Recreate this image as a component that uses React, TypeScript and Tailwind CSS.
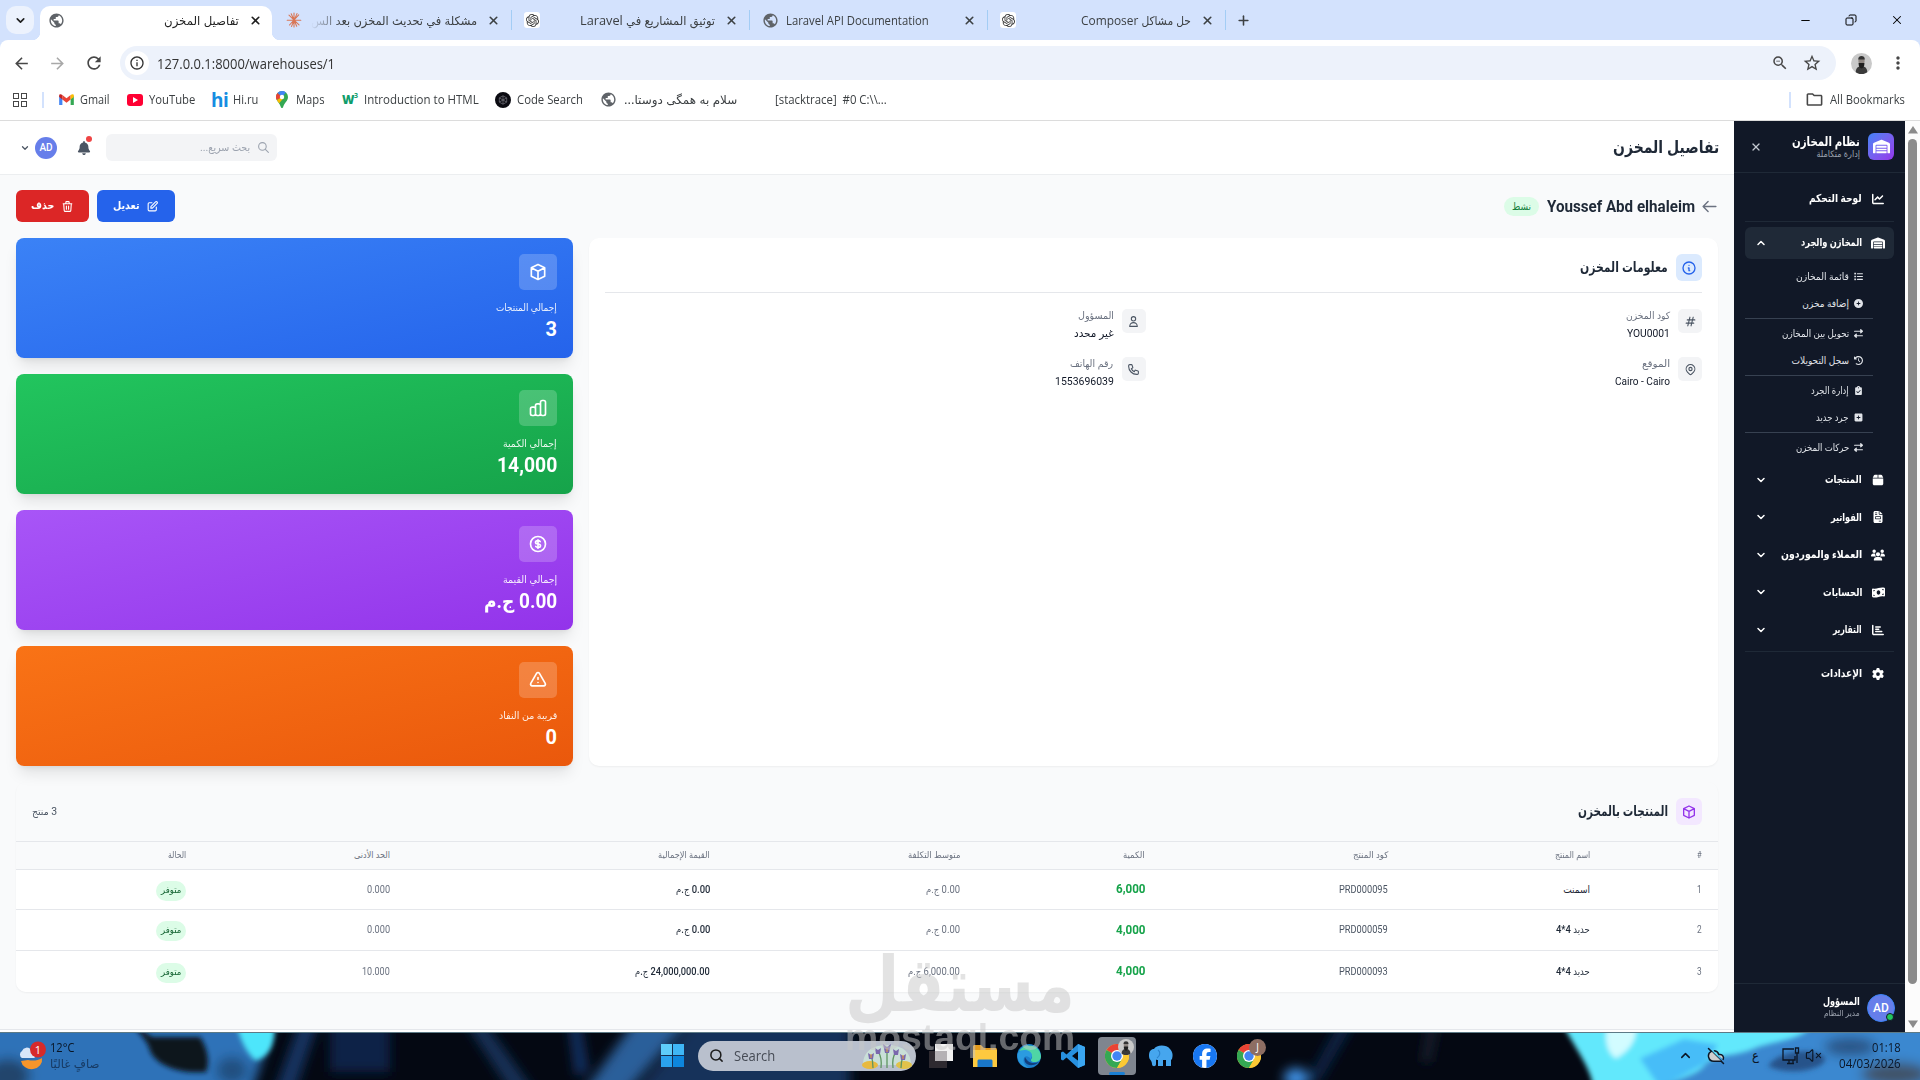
import { useLayoutEffect, useRef, useState, type ReactNode } from 'react';
import type { IconType } from 'react-icons';
import {
  FaBell,
  FaBox,
  FaChartBar,
  FaChartLine,
  FaCirclePlus,
  FaClipboardCheck,
  FaClockRotateLeft,
  FaFacebook,
  FaFileInvoice,
  FaGear,
  FaList,
  FaMoneyBillWave,
  FaRightLeft,
  FaSquarePlus,
  FaUsers,
  FaWarehouse,
} from 'react-icons/fa6';
import {
  HiOutlineArrowLeft,
  HiOutlineChartBar,
  HiOutlineCube,
  HiOutlineCurrencyDollar,
  HiOutlineExclamation,
  HiOutlineHashtag,
  HiOutlineInformationCircle,
  HiOutlineLocationMarker,
  HiOutlinePencilAlt,
  HiOutlinePhone,
  HiOutlineSearch,
  HiOutlineTrash,
  HiOutlineUser,
} from 'react-icons/hi';
import {
  MdArrowBack,
  MdArrowForward,
  MdInfoOutline,
  MdMoreVert,
  MdOutlineFolder,
  MdPublic,
  MdRefresh,
  MdStarBorder,
  MdZoomOut,
} from 'react-icons/md';
import { SiOpenai } from 'react-icons/si';
import { ChevronDown, ChevronUp, CloudOff, Copy, Minus, Plus, Search, VolumeX, X } from 'lucide-react';

type FitProps = {
  w: number;
  ltr?: boolean;
  className?: string;
  children: ReactNode;
};

// Single line of text squeezed or widened to a fixed width.
function Fit({ w, ltr = false, className = '', children }: FitProps) {
  const ref = useRef<HTMLSpanElement>(null);
  const [scale, setScale] = useState(1);

  useLayoutEffect(() => {
    const natural = ref.current?.offsetWidth ?? 0;
    if (natural > 0) setScale(w / natural);
  }, [w]);

  return (
    <span dir={ltr ? 'ltr' : 'rtl'} className={`flex shrink-0 ${className}`} style={{ width: w }}>
      <span
        ref={ref}
        className={`inline-block shrink-0 whitespace-nowrap ${ltr ? 'origin-left' : 'origin-right'}`}
        style={{ transform: `scaleX(${scale})` }}
      >
        {children}
      </span>
    </span>
  );
}

/* ---------- browser ---------- */

function ClaudeIcon() {
  return (
    <svg viewBox="0 0 16 16" className="size-4" stroke="#d97757" strokeWidth="1.1" strokeLinecap="round">
      <path d="M8 1v14M1.200 8.300h13.600M3 3.200l10 9.600M12.700 2.800L3.500 13M5.200 1.800l5.500 12.500M11 1.600L5.500 14.400" />
    </svg>
  );
}

function OpenAiIcon() {
  return (
    <span className="flex size-4 items-center justify-center rounded-[3px] bg-white">
      <SiOpenai className="size-[13px] text-[#333]" />
    </span>
  );
}

type TabProps = {
  icon: ReactNode;
  title: string;
  w: number;
  ltr?: boolean;
  fade?: boolean;
};

function BrowserTab({ icon, title, w, ltr, fade }: TabProps) {
  return (
    <div className="flex h-5 w-[238px] items-center border-r border-[#a3cdf5] pr-[11px] pl-3">
      {icon}
      <div className={`flex flex-1 pt-[2px] pr-[10px] pl-[7px] ${ltr ? 'justify-start' : 'justify-end'}`}>
        <div className="relative">
          <Fit w={w} ltr={ltr} className="text-[12px] text-[#3c4043]">
            {title}
          </Fit>
          {fade && <div className="absolute inset-y-0 left-0 w-8 bg-linear-to-r from-[#d3e2fd] to-transparent" />}
        </div>
      </div>
      <X className="size-[13px] text-[#3c4043]" strokeWidth={3} />
    </div>
  );
}

function TabStrip() {
  return (
    <div className="flex h-10 items-center bg-[#d3e2fd]">
      <div className="ml-[6px] flex size-7 items-center justify-center rounded-[10px] bg-[#ecf2fd]">
        <ChevronDown className="size-[13px] text-[#1f1f1f]" strokeWidth={3} />
      </div>
      <div className="relative ml-[6px] flex h-[34px] w-[232px] items-center self-end rounded-t-[10px] bg-white pr-[10px] pb-[6px] pl-2">
        <div className="absolute bottom-0 -left-2 size-2 bg-[radial-gradient(circle_at_0_0,#d3e2fd_8px,#fff_8.5px)]" />
        <div className="absolute -right-2 bottom-0 size-2 bg-[radial-gradient(circle_at_100%_0,#d3e2fd_8px,#fff_8.5px)]" />
        <MdPublic className="size-[17px] text-[#5f6368]" />
        <div className="flex flex-1 justify-end pt-[2px] pr-[10px]">
          <Fit w={75} className="text-[12px] text-[#1f1f1f]">
            تفاصيل المخزن
          </Fit>
        </div>
        <X className="size-[13px] text-[#1f1f1f]" strokeWidth={3} />
      </div>
      <div className="ml-[2px] flex items-center">
        <BrowserTab icon={<ClaudeIcon />} title="مشكلة في تحديث المخزن بعد الس" w={166} fade />
        <BrowserTab icon={<OpenAiIcon />} title="توثيق المشاريع في Laravel" w={135} />
        <BrowserTab icon={<MdPublic className="size-[17px] text-[#5f6368]" />} title="Laravel API Documentation" w={143} ltr />
        <BrowserTab icon={<OpenAiIcon />} title="حل مشاكل Composer" w={110} />
      </div>
      <Plus className="ml-[10px] size-[15px] text-[#3c4043]" strokeWidth={2.5} />
      <div className="mr-[16px] ml-auto flex items-center gap-[33px] text-black">
        <Minus className="size-[13px]" strokeWidth={1.8} />
        <Copy className="size-[12px] -scale-x-100" strokeWidth={2} />
        <X className="size-[14px]" strokeWidth={1.8} />
      </div>
    </div>
  );
}

function UserPhoto({ className }: { className: string }) {
  return (
    <svg viewBox="0 0 20 20" className={className}>
      <circle cx="10" cy="10" r="10" fill="#c9c9c9" />
      <path d="M4.500 18.400C4.500 14 7 12.500 10 12.500s5.500 1.500 5.500 5.900A10 10 0 0 1 4.500 18.400z" fill="#3a3a3a" />
      <circle cx="10" cy="7.500" r="3" fill="#8d8580" />
      <path d="M6.800 6.300C7 3.700 8.200 2.900 10 2.900s3 .8 3.200 3.400z" fill="#333" />
      <path d="M7.200 9.500h5.600c0 3-1 5.200-2.800 5.200S7.200 12.500 7.200 9.500z" fill="#1e1e1e" />
    </svg>
  );
}

function AddressBar() {
  return (
    <div className="flex h-[46px] items-center rounded-t-[8px] bg-white">
      <MdArrowBack className="ml-3 size-[19px] text-[#474747]" />
      <MdArrowForward className="ml-[17px] size-[19px] text-[#a8a8a8]" />
      <MdRefresh className="ml-[17px] size-[20px] text-[#474747]" />
      <div className="ml-4 flex h-[34px] w-[1716px] items-center rounded-full bg-[#edf2fb] pl-[5px]">
        <span className="flex size-6 items-center justify-center rounded-full bg-white">
          <MdInfoOutline className="size-4 text-[#333]" />
        </span>
        <Fit w={178} ltr className="ml-[8px] text-[14px] text-[#333]">
          127.0.0.1:8000/warehouses/1
        </Fit>
        <MdZoomOut className="ml-auto size-[18px] text-[#474747]" />
        <MdStarBorder className="mr-[14px] ml-[13px] size-[20px] text-[#474747]" />
      </div>
      <UserPhoto className="ml-[15px] size-[21px]" />
      <MdMoreVert className="ml-[16px] size-5 text-[#474747]" />
    </div>
  );
}

function GmailIcon() {
  return (
    <svg viewBox="0 0 16 12" className="h-[11px] w-[15px]">
      <path d="M0 1.500V12h3.500V5z" fill="#4285f4" />
      <path d="M16 1.500V12h-3.500V5z" fill="#34a853" />
      <path d="M3.500 1v5L8 9.500 12.500 6V1L8 4.500z" fill="#ea4335" />
      <path d="M12.500 1.200v4.800L16 3.300V1.800C16 0 14 0 12.500 1.200z" fill="#fbbc04" />
      <path d="M3.500 1.200V6L0 3.300V1.800C0 0 2 0 3.500 1.200z" fill="#c5221f" />
    </svg>
  );
}

function MapsIcon() {
  return (
    <svg viewBox="0 0 12 17" className="h-[17px] w-[12px]">
      <path d="M6 0a6 6 0 0 0-6 6c0 4 4 6 5 10.500.300.700 1.700.700 2 0C8 12 12 10 12 6a6 6 0 0 0-6-6z" fill="#34a853" />
      <path d="M6 0a6 6 0 0 0-4.600 2.100L6 6l3.900-4.600A6 6 0 0 0 6 0z" fill="#4285f4" />
      <path d="M1.400 2.100A6 6 0 0 0 .9 9L6 6z" fill="#ea4335" />
      <path d="M.9 9c.6 1.200 1.500 2.100 2.300 3.300L8 6.500 6 6z" fill="#fbbc04" />
      <circle cx="6" cy="6" r="2.200" fill="#fff" />
    </svg>
  );
}

function Bookmarks() {
  return (
    <div className="flex h-[35px] items-center border-b border-[#dcdcdc] bg-white pb-[7px] text-[12px] text-[#3c4043]">
      <div className="ml-[13px] grid grid-cols-2 gap-[2px]">
        <span className="size-[6px] border-[1.5px] border-[#474747]" />
        <span className="size-[6px] border-[1.5px] border-[#474747]" />
        <span className="size-[6px] border-[1.5px] border-[#474747]" />
        <span className="size-[6px] border-[1.5px] border-[#474747]" />
      </div>
      <div className="mr-[15px] ml-[15px] h-4 w-[2px] bg-[#d3e2fd]" />
      <GmailIcon />
      <Fit w={30} ltr className="ml-[6px]">Gmail</Fit>
      <span className="ml-[17px] flex h-[12px] w-[16px] items-center justify-center rounded-[3px] bg-[#ff0033]">
        <svg viewBox="0 0 6 6" className="size-[6px]">
          <path d="M1 0l5 3-5 3z" fill="#fff" />
        </svg>
      </span>
      <Fit w={46} ltr className="ml-[6px]">YouTube</Fit>
      <span className="ml-[16px] w-[16px] text-[19px] leading-4 font-bold tracking-tight text-[#168de2]">hi</span>
      <Fit w={25} ltr className="ml-[6px]">Hi.ru</Fit>
      <span className="ml-[18px]"><MapsIcon /></span>
      <Fit w={29} ltr className="ml-[8px]">Maps</Fit>
      <span className="ml-[17px] flex w-[16px] items-center">
        <Fit w={12} ltr className="text-[12px] leading-4 font-extrabold text-[#0f9d6b]">W</Fit>
        <span className="mb-[7px] text-[7px] leading-2 font-bold text-[#0f9d6b]">3</span>
      </span>
      <Fit w={115} ltr className="ml-[6px]">Introduction to HTML</Fit>
      <span className="ml-[16px] flex size-4 items-center justify-center rounded-full bg-[#0b0b12]">
        <svg viewBox="0 0 10 10" className="size-[10px]" fill="none" stroke="#77777f" strokeWidth=".7">
          <path d="M5 .8l3.700 2.100v4.200L5 9.200 1.300 7.100V2.900zM5 .8v8.400M1.300 2.900l7.400 4.200M8.700 2.900L1.300 7.100" />
        </svg>
      </span>
      <Fit w={66} ltr className="ml-[6px]">Code Search</Fit>
      <MdPublic className="ml-[17px] size-[17px] text-[#5f6368]" />
      <Fit w={113} className="ml-[7px]">سلام به همگی دوستا...</Fit>
      <Fit w={112} ltr className="ml-[38px]">[stacktrace]&nbsp; #0 C:\\...</Fit>
      <div className="ml-auto h-4 w-[2px] bg-[#d3e2fd]" />
      <MdOutlineFolder className="ml-[14px] size-[19px] text-[#474747]" />
      <Fit w={75} ltr className="mr-[15px] ml-[6px]">All Bookmarks</Fit>
    </div>
  );
}

/* ---------- sidebar ---------- */

type NavRowProps = {
  icon: IconType;
  iconClass?: string;
  label: string;
  w: number;
  chevron?: 'up' | 'down';
  className: string;
};

function NavRow({ icon: Icon, iconClass = 'size-[12px]', label, w, chevron, className }: NavRowProps) {
  return (
    <div className={`flex shrink-0 items-center pr-[8px] pl-[10px] text-white ${className}`}>
      <span className="flex w-4 justify-center">
        <Icon className={iconClass} />
      </span>
      <Fit w={w} className="mr-2 pt-px text-[11px] font-bold">{label}</Fit>
      {chevron === 'up' && <ChevronUp className="mr-auto size-[12px]" strokeWidth={3} />}
      {chevron === 'down' && <ChevronDown className="mr-auto size-[12px]" strokeWidth={3} />}
    </div>
  );
}

const SUB_GROUPS: { icon: IconType; label: string; w: number }[][] = [
  [
    { icon: FaList, label: 'قائمة المخازن', w: 53 },
    { icon: FaCirclePlus, label: 'إضافة مخزن', w: 47 },
  ],
  [
    { icon: FaRightLeft, label: 'تحويل بين المخازن', w: 67 },
    { icon: FaClockRotateLeft, label: 'سجل التحويلات', w: 57 },
  ],
  [
    { icon: FaClipboardCheck, label: 'إدارة الجرد', w: 38 },
    { icon: FaSquarePlus, label: 'جرد جديد', w: 33 },
  ],
  [{ icon: FaRightLeft, label: 'حركات المخزن', w: 53 }],
];

function Sidebar() {
  return (
    <aside className="flex w-[171px] shrink-0 flex-col bg-[#111827]">
      <div className="flex h-[52px] items-center border-b border-[#1f2937] pr-[11px] pl-4">
        <span className="flex h-[27px] w-[26px] items-center justify-center rounded-[6px] bg-linear-to-br from-[#3b82f6] to-[#9333ea] text-white">
          <FaWarehouse className="size-[17px]" />
        </span>
        <div className="mr-2 flex flex-col">
          <Fit w={68} className="text-[13px] leading-[14px] font-bold text-white">نظام المخازن</Fit>
          <Fit w={44} className="text-[9px] leading-[10px] text-[#9ca3af]">إدارة متكاملة</Fit>
        </div>
        <X className="mr-auto size-[12px] text-[#c4c9d1]" strokeWidth={2.5} />
      </div>
      <nav className="flex flex-1 flex-col px-[11px] pt-[10px]">
        <NavRow icon={FaChartLine} label="لوحة التحكم" w={53} className="h-8" />
        <div className="mt-[6px] mb-[5px] h-px bg-[#1f2937]" />
        <NavRow
          icon={FaWarehouse}
          iconClass="size-[14px]"
          label="المخازن والجرد"
          w={61}
          chevron="up"
          className="h-8 rounded-[6px] bg-[#1f2937]"
        />
        <div className="flex flex-col pt-[4px]">
          {SUB_GROUPS.map((group, index) => (
            <div key={index} className="flex flex-col">
              {index > 0 && <div className="my-px mr-[21px] h-px bg-[#374151]" />}
              {group.map(({ icon: Icon, label, w }) => (
                <div key={label} className="flex h-[27px] items-center pr-[31px] pb-px text-[#e1e4e9]">
                  <Icon className="size-[9px]" />
                  <Fit w={w} className="mr-[5px] text-[10px]">{label}</Fit>
                </div>
              ))}
            </div>
          ))}
        </div>
        <NavRow icon={FaBox} label="المنتجات" w={37} chevron="down" className="h-[37.5px]" />
        <NavRow icon={FaFileInvoice} label="الفواتير" w={31} chevron="down" className="h-[37.5px]" />
        <NavRow icon={FaUsers} iconClass="size-[14px]" label="العملاء والموردون" w={81} chevron="down" className="h-[37.5px]" />
        <NavRow icon={FaMoneyBillWave} iconClass="size-[13px]" label="الحسابات" w={39} chevron="down" className="h-[37.5px]" />
        <NavRow icon={FaChartBar} label="التقارير" w={29} chevron="down" className="h-[37.5px]" />
        <div className="mt-[2px] mb-[6px] h-px bg-[#1f2937]" />
        <NavRow icon={FaGear} label="الإعدادات" w={41} className="h-8" />
      </nav>
      <div className="flex h-[49px] items-center border-t border-[#1f2937] pr-[10px]">
        <div className="relative mb-[1px] flex size-7 items-center justify-center rounded-full border border-[#3b82f6] bg-[#667eea] text-[12px] font-medium text-white">
          AD
          <span className="absolute right-0 bottom-0 size-[8px] rounded-full border border-[#111827] bg-[#22c55e]" />
        </div>
        <div className="mr-[7px] mb-[2px] flex flex-col">
          <Fit w={37} className="text-[11px] leading-[12px] font-bold text-white">المسؤول</Fit>
          <Fit w={36} className="text-[8.5px] leading-[10px] text-[#9ca3af]">مدير النظام</Fit>
        </div>
      </div>
    </aside>
  );
}

/* ---------- page ---------- */

function PageHeader() {
  return (
    <header className="flex h-[54px] items-center border-b border-[#eceef0] bg-white pr-[15px] pl-[20px]">
      <Fit w={106} className="pt-px text-[17px] font-bold text-[#1f2937]">تفاصيل المخزن</Fit>
      <div className="mr-auto flex h-[27px] w-[171px] items-center rounded-[6px] bg-[#f3f4f6] pr-[7px]">
        <HiOutlineSearch className="size-[13px] text-[#9ca3af]" />
        <Fit w={50} className="mr-[7px] pt-px text-[11px] text-[#9ca3af]">بحث سريع...</Fit>
      </div>
      <div className="relative mr-[15px]">
        <FaBell className="size-[14px] text-[#4b5563]" />
        <span className="absolute -top-[5px] -right-[1px] size-[6px] rounded-full bg-[#ef4444]" />
      </div>
      <div className="mr-[20px] flex size-[22px] items-center justify-center rounded-full bg-[#667eea] text-[10px] font-medium text-white">
        AD
      </div>
      <ChevronDown className="mr-[5px] size-[10px] text-[#4b5563]" strokeWidth={3} />
    </header>
  );
}

function TitleRow() {
  return (
    <div className="flex h-8 items-center">
      <HiOutlineArrowLeft className="size-[17px] text-[#6b7280]" />
      <Fit w={148} ltr className="mr-[6px] pt-px text-[17px] font-bold text-[#1f2937]">Youssef Abd elhaleim</Fit>
      <span className="mr-2 flex h-[19px] w-[35px] items-center justify-center rounded-full bg-[#dcfce7]">
        <Fit w={19} className="text-[10px] text-[#15803d]">نشط</Fit>
      </span>
      <div className="mr-auto flex gap-2 text-white">
        <button type="button" className="flex h-8 w-[78px] items-center justify-center gap-[6px] rounded-[6px] bg-[#2563eb]">
          <HiOutlinePencilAlt className="size-[13px]" />
          <Fit w={27} className="text-[11px] font-bold">تعديل</Fit>
        </button>
        <button type="button" className="flex h-8 w-[73px] items-center justify-center gap-[6px] rounded-[6px] bg-[#dc2626]">
          <HiOutlineTrash className="size-[13px]" />
          <Fit w={23} className="text-[11px] font-bold">حذف</Fit>
        </button>
      </div>
    </div>
  );
}

const INFO_ITEMS: { icon: IconType; label: string; labelW: number; value: string; valueW: number; ltr?: boolean }[] = [
  { icon: HiOutlineHashtag, label: 'كود المخزن', labelW: 44, value: 'YOU0001', valueW: 43, ltr: true },
  { icon: HiOutlineUser, label: 'المسؤول', labelW: 36, value: 'غير محدد', valueW: 40 },
  { icon: HiOutlineLocationMarker, label: 'الموقع', labelW: 28, value: 'Cairo - Cairo', valueW: 55, ltr: true },
  { icon: HiOutlinePhone, label: 'رقم الهاتف', labelW: 43, value: '1553696039', valueW: 59, ltr: true },
];

function InfoCard() {
  return (
    <section className="w-[1129px] rounded-[10px] bg-white p-4 shadow-xs">
      <div className="flex items-center border-b border-[#e5e7eb] pb-[11px]">
        <span className="flex h-[27px] w-[26px] items-center justify-center rounded-[6px] bg-[#dbeafe]">
          <HiOutlineInformationCircle className="size-4 text-[#2563eb]" />
        </span>
        <Fit w={88} className="mr-2 pb-px text-[14px] font-bold text-[#1f2937]">معلومات المخزن</Fit>
      </div>
      <div className="mt-4 grid grid-cols-2 gap-x-4 gap-y-[15px]">
        {INFO_ITEMS.map(({ icon: Icon, label, labelW, value, valueW, ltr }) => (
          <div key={label} className="flex h-[33px]">
            <span className="flex size-6 items-center justify-center rounded-[5px] bg-[#f3f4f6]">
              <Icon className="size-[13px] text-[#4b5563]" />
            </span>
            <div className="mr-2 -mt-px flex flex-col gap-[2px]">
              <Fit w={labelW} className="text-[10px] leading-4 text-[#6b7280]">{label}</Fit>
              <Fit w={valueW} ltr={ltr} className="text-[11px] leading-4 text-[#111827]">{value}</Fit>
            </div>
          </div>
        ))}
      </div>
    </section>
  );
}

const STATS: { icon: IconType; label: string; labelW: number; value: string; valueW: number; bg: string }[] = [
  {
    icon: HiOutlineCube,
    label: 'إجمالي المنتجات',
    labelW: 61,
    value: '3',
    valueW: 11,
    bg: 'bg-linear-to-br from-[#3b82f6] to-[#2563eb]',
  },
  {
    icon: HiOutlineChartBar,
    label: 'إجمالي الكمية',
    labelW: 54,
    value: '14,000',
    valueW: 60,
    bg: 'bg-linear-to-br from-[#22c55e] to-[#16a34a]',
  },
  {
    icon: HiOutlineCurrencyDollar,
    label: 'إجمالي القيمة',
    labelW: 54,
    value: '0.00 ج.م',
    valueW: 73,
    bg: 'bg-linear-to-br from-[#a855f7] to-[#9333ea]',
  },
  {
    icon: HiOutlineExclamation,
    label: 'قريبة من النفاد',
    labelW: 58,
    value: '0',
    valueW: 11,
    bg: 'bg-linear-to-br from-[#f97316] to-[#ea580c]',
  },
];

function StatCards() {
  return (
    <div className="flex w-[557px] flex-col gap-4">
      {STATS.map(({ icon: Icon, label, labelW, value, valueW, bg }) => (
        <div key={label} className={`flex h-[120px] flex-col rounded-[8px] p-4 text-white shadow-lg ${bg}`}>
          <span className="flex size-[38px] items-center justify-center rounded-[5px] bg-white/20">
            <Icon className="size-[20px]" />
          </span>
          <Fit w={labelW} className="mt-[10px] text-[10px] leading-4 text-white/90">{label}</Fit>
          <Fit w={valueW} className="mt-[1px] text-[20px] leading-[25px] font-bold">{value}</Fit>
        </div>
      ))}
    </div>
  );
}

const COLUMNS = [
  { label: '#', w: 5, cell: 'w-[112px]' },
  { label: 'اسم المنتج', w: 35, cell: 'w-[202px]' },
  { label: 'كود المنتج', w: 35, cell: 'w-[243px]' },
  { label: 'الكمية', w: 22, cell: 'w-[185px]' },
  { label: 'متوسط التكلفة', w: 52, cell: 'w-[250px]' },
  { label: 'القيمة الإجمالية', w: 52, cell: 'w-[320px]' },
  { label: 'الحد الأدنى', w: 36, cell: 'w-[204px]' },
  { label: 'الحالة', w: 18, cell: 'w-[186px]' },
];

const PRODUCTS = [
  { id: '1', name: 'اسمنت', nameW: 27, code: 'PRD000095', qty: '6,000', cost: '0.00 ج.م', costW: 34, total: '0.00 ج.م', totalW: 34, min: '0.000', minW: 23 },
  { id: '2', name: 'حديد 4*4', nameW: 34, code: 'PRD000059', qty: '4,000', cost: '0.00 ج.م', costW: 34, total: '0.00 ج.م', totalW: 34, min: '0.000', minW: 23 },
  { id: '3', name: 'حديد 4*4', nameW: 34, code: 'PRD000093', qty: '4,000', cost: '6,000.00 ج.م', costW: 52, total: '24,000,000.00 ج.م', totalW: 75, min: '10.000', minW: 28 },
];

function ProductsCard() {
  return (
    <section className="mt-4 overflow-hidden rounded-[10px] bg-[#f9fafb] shadow-xs">
      <div className="flex h-[60px] items-center border-b border-[#e5e7eb] px-4">
        <span className="flex h-[27px] w-[26px] items-center justify-center rounded-[6px] bg-[#f3e8ff]">
          <HiOutlineCube className="size-4 text-[#9333ea]" />
        </span>
        <Fit w={90} className="mr-2 pb-px text-[14px] font-bold text-[#1f2937]">المنتجات بالمخزن</Fit>
        <Fit w={25} className="mr-auto text-[10px] text-[#4b5563]">3 منتج</Fit>
      </div>
      <div className="flex h-7 items-center border-b border-[#e5e7eb]">
        {COLUMNS.map(({ label, w, cell }) => (
          <div key={label} className={`px-4 ${cell}`}>
            <Fit w={w} className="text-[9px] text-[#6b7280]">{label}</Fit>
          </div>
        ))}
      </div>
      <div className="divide-y divide-[#e5e7eb] bg-white text-[10px] text-[#6b7280]">
        {PRODUCTS.map((p) => (
          <div key={p.id} className="flex h-[41px] items-center pb-px first:h-[40px]">
            <div className="w-[112px] px-4">
              <Fit w={5}>{p.id}</Fit>
            </div>
            <div className="w-[202px] px-4">
              <Fit w={p.nameW} className="font-medium text-[#1f2937]">{p.name}</Fit>
            </div>
            <div className="w-[243px] px-4">
              <Fit w={49} className="text-[#4b5563]">{p.code}</Fit>
            </div>
            <div className="w-[185px] px-4">
              <Fit w={30} className="text-[12px] font-bold text-[#16a34a]">{p.qty}</Fit>
            </div>
            <div className="w-[250px] px-4">
              <Fit w={p.costW}>{p.cost}</Fit>
            </div>
            <div className="w-[320px] px-4">
              <Fit w={p.totalW} className="font-medium text-[#1f2937]">{p.total}</Fit>
            </div>
            <div className="w-[204px] px-4">
              <Fit w={p.minW}>{p.min}</Fit>
            </div>
            <div className="w-[186px] px-4 pt-[3px]">
              <span className="flex h-5 w-[30px] items-center justify-center rounded-full bg-[#dcfce7]">
                <Fit w={20} className="text-[9px] text-[#166534]">متوفر</Fit>
              </span>
            </div>
          </div>
        ))}
      </div>
    </section>
  );
}

function PageScrollbar() {
  return (
    <div className="flex w-[15px] shrink-0 flex-col items-center bg-[#fcfcfc] pt-[5px] pb-[4px]">
      <svg viewBox="0 0 10 8" className="h-[8px] w-[10px]">
        <path d="M5 0l5 7.500H0z" fill="#8b8b8b" />
      </svg>
      <div className="mt-[5px] h-[845px] w-[9px] rounded-full bg-[#8b8b8b]" />
      <svg viewBox="0 0 10 8" className="mt-auto h-[8px] w-[10px]">
        <path d="M5 8L10 .5H0z" fill="#8b8b8b" />
      </svg>
    </div>
  );
}

/* ---------- taskbar ---------- */

function Wallpaper() {
  return (
    <svg viewBox="0 0 1920 48" preserveAspectRatio="none" className="absolute inset-0 size-full">
      <defs>
        <filter id="soft" filterUnits="userSpaceOnUse" x="-40" y="-40" width="2000" height="130">
          <feGaussianBlur stdDeviation="6" />
        </filter>
        <filter id="crisp" filterUnits="userSpaceOnUse" x="-40" y="-40" width="2000" height="130">
          <feGaussianBlur stdDeviation="2.500" />
        </filter>
      </defs>
      <rect width="1920" height="48" fill="#040812" />
      <g filter="url(#soft)">
        <path d="M-30-30H280L245 80H-30z" fill="#2d72b8" />
        <ellipse cx="8" cy="44" rx="22" ry="18" fill="#24456c" />
        <ellipse cx="232" cy="38" rx="16" ry="14" fill="#235080" />
        <path d="M303-20h18l-30 90h-20z" fill="#133463" />
        <path d="M330-20h60v60h-60z" fill="#0c2146" />
        <path d="M460-20h18l70 100h-24z" fill="#123059" />
        <path d="M568-20h10l10 60-12 4z" fill="#16366a" />
        <path d="M640-20h55L610 80h-40z" fill="#2a5f9a" />
        <path d="M700-20h150v100H620z" fill="#16305a" />
        <ellipse cx="1296" cy="46" rx="12" ry="10" fill="#3f93e8" />
        <path d="M1345-20h14l-40 70h-12z" fill="#10284c" />
        <path d="M1430-20h10l-10 50h-8z" fill="#1a2430" />
        <path d="M1640-20h320v110h-320z" fill="#3a88d0" />
        <ellipse cx="1850" cy="14" rx="26" ry="10" fill="#2c5486" />
        <ellipse cx="1895" cy="42" rx="34" ry="12" fill="#3f5268" />
      </g>
      <g filter="url(#crisp)">
        <path d="M132-10c8 12 16 18 18 28 4 10 20 24 56 22 4-10 2-24-6-36H152z" fill="#09121f" />
        <path d="M236-10h38c2 22-6 36-19 38-10-10-15-22-19-38z" fill="#4de6fb" />
        <path d="M1562-10h250c-6 18-40 18-58 26-24 10-40 4-50 18-10 12-40 16-60 30h-50c0-26-18-46-32-74z" fill="#62e8fc" />
        <path d="M1608-10h28c2 20-10 30-20 36-10-6-12-22-8-36z" fill="#d2fcff" />
        <path d="M1640 26l44-20 34 6-14 20-44 24z" fill="#46bdf8" />
        <path d="M1768 34c10-16 44-20 56-10 8 10-30 22-56 10z" fill="#27528a" />
      </g>
    </svg>
  );
}

function ChromeIcon({ children }: { children: ReactNode }) {
  return (
    <span className="relative flex">
      <svg viewBox="0 0 24 24" className="size-6">
        <circle cx="12" cy="12" r="12" fill="#fcc934" />
        <path d="M12 12L1.600 6A12 12 0 0 1 22.400 6z" fill="#ea4335" />
        <path d="M1.600 6A12 12 0 0 0 12 24l5.200-9L12 12z" fill="#34a853" />
        <path d="M12 6h10.400A12 12 0 0 1 12 24l5.200-9z" fill="#fcc934" />
        <circle cx="12" cy="12" r="6" fill="#fff" />
        <circle cx="12" cy="12" r="4.700" fill="#4285f4" />
      </svg>
      {children}
    </span>
  );
}

function FlowersArt() {
  return (
    <svg viewBox="0 0 52 26" className="h-[26px] w-[52px]">
      <path d="M2 22C2 8 12 2 26 2s24 6 24 20z" fill="#c9dfd8" />
      <ellipse cx="9" cy="22" rx="8" ry="4" fill="#e8b93e" />
      <ellipse cx="43" cy="22" rx="8" ry="4" fill="#e0c24a" />
      <path d="M12 25c0-8-1-10-2-13M20 25c1-8 0-12-3-17M26 25V8M32 25c-1-8 0-12 3-16M40 25c0-6 1-9 2-12" stroke="#5f9560" strokeWidth="1.300" fill="none" />
      <path d="M7 10l3 2 3-2-1 6H8zM14 5l3 2 3-2-1 6h-4zM22 1l4 3 4-3-2 9h-4zM32 6l3 2 3-2-1 6h-4zM39 11l3 2 3-2-1 6h-4z" fill="#7a68ad" />
      <path d="M9.500 11h1v4h-1zM25.500 5h1v4h-1zM41.500 12h1v4h-1z" fill="#e9a23b" />
    </svg>
  );
}

function Taskbar() {
  return (
    <div className="relative h-12 shrink-0 overflow-hidden border-t border-[#5d7a86]">
      <Wallpaper />
      <div className="relative flex h-full items-center pb-[2px]">
        <svg viewBox="0 0 28 30" className="ml-[19px] h-[30px] w-[28px]">
          <path d="M2 20a10.500 9.500 0 0 0 21-3c-5 3-9 3-14 2z" fill="#f6952a" />
          <path d="M3 17a4 4 0 0 1 0-7 5 5 0 0 1 9-1 4 4 0 0 1 3 8z" fill="#d8e6f8" />
          <circle cx="19" cy="8.500" r="8" fill="#d62a2a" />
          <text x="19" y="12.500" textAnchor="middle" fontSize="11" fill="#fff">1</text>
        </svg>
        <div className="ml-[3px] flex flex-col items-start text-[12px] leading-4">
          <Fit w={24} ltr className="text-[#081423]">12°C</Fit>
          <Fit w={50} className="text-[#173a63]">صافٍ غالبًا</Fit>
        </div>
        <div className="ml-[561px] grid size-[23px] grid-cols-2 gap-px">
          <span className="bg-[#5fcdfa]" />
          <span className="bg-[#3fb6f5]" />
          <span className="bg-[#2aa3ee]" />
          <span className="bg-[#0d86dd]" />
        </div>
        <div className="ml-[14px] flex h-[30px] w-[218px] items-center rounded-full bg-[#b9c0cd] pr-[3px] pl-[11px]">
          <Search className="size-[15px] text-[#1c1c1c]" strokeWidth={2.4} />
          <Fit w={41} ltr className="ml-[10px] text-[14px] text-[#464b55]">Search</Fit>
          <span className="ml-auto"><FlowersArt /></span>
        </div>
        <svg viewBox="0 0 24 24" className="ml-[13px] size-6">
          <path d="M0 7h18v17H0z" fill="#2e2a30" />
          <path d="M6 0h18v17H6z" fill="#f2f2f2" />
          <path d="M6 7h12v10H6z" fill="#b5b2b5" />
        </svg>
        <svg viewBox="0 0 24 24" className="ml-5 size-6">
          <path d="M0 2.500C0 1.500.8 1 1.500 1H8l3 3h11.500c.8 0 1.500.5 1.500 1.500V23H0z" fill="#e39a1c" />
          <path d="M0 6h24v17H0z" fill="#fdc93f" />
          <path d="M4.500 17c0-1 .7-1.500 1.500-1.500h12c.8 0 1.500.5 1.500 1.500v6h-15z" fill="#1977c9" />
        </svg>
        <svg viewBox="0 0 24 24" className="ml-5 size-6">
          <circle cx="12" cy="12" r="12" fill="#1b7fcd" />
          <path d="M2 7A12 12 0 0 1 24 12c0 4-3 6-6.500 6-3 0-4.500-1.500-3-3C17 11 12 6 2 7z" fill="#4fd5a5" />
          <path d="M1 9c4-5 13-3 14 2 0 2-1 2-1 4-5-6-9-1-7 4 1 2 3 4 5 5A12 12 0 0 1 1 9z" fill="#2b9be0" />
          <path d="M8 13c-2 5 2 9 8 8 3-.4 5-2 6-3-8 3-12-1-14-5z" fill="#123f7d" />
        </svg>
        <svg viewBox="0 0 24 24" className="ml-5 size-6">
          <path d="M17 0l7 3v18l-7 3L5.500 13.500 2 16.500 0 15.500v-7L2 7.500 5.500 10.500zM17.500 7L11 12l6.500 5z" fill="#2790e0" fillRule="evenodd" />
          <path d="M17 0l7 3v18l-7 3z" fill="#3aa5f0" />
        </svg>
        <div className="relative ml-[13px] flex h-[38px] w-[38px] items-center justify-center rounded-[4px] bg-[#7f858f]">
          <ChromeIcon>
            <UserPhoto className="absolute -top-[5px] left-[13px] size-[16px]" />
          </ChromeIcon>
          <span className="absolute bottom-0 h-[3px] w-4 rounded-full bg-[#1b7fd3]" />
        </div>
        <svg viewBox="0 0 24 24" className="ml-[13px] size-6">
          <path d="M0 12C0 7 2 5 5 5c2-4 12-5 16 0 3 3 3 7 2 10l-1 1v6h-5v-6h-3v6H9v-6c-1 0-2 0-2-1v5c0 3-4 3-4 0 0-4-3-4-3-8z" fill="#46a6ee" />
          <path d="M9 6c3 2 2 6-1 8" stroke="#2c82cc" strokeWidth="1.200" fill="none" />
        </svg>
        <span className="ml-5 flex rounded-full bg-white">
          <FaFacebook className="size-6 text-[#1877f2]" />
        </span>
        <span className="ml-5">
          <ChromeIcon>
            <span className="absolute -top-[5px] left-[12px] flex size-[17px] items-center justify-center rounded-full bg-[#8d6e63] text-[10px] text-white">
              J
            </span>
          </ChromeIcon>
        </span>
        <div className="mr-[19px] ml-auto flex items-center text-[#0b1626]">
          <ChevronUp className="size-[15px]" strokeWidth={2.4} />
          <CloudOff className="ml-[14px] size-[18px] fill-[#d0d0d0]" strokeWidth={2} />
          <span className="ml-[27px] text-[13px]">ع</span>
          <svg viewBox="0 0 18 18" className="ml-[23px] size-[18px]" fill="none" stroke="#0b1626" strokeWidth="1.300">
            <path d="M12 2H1v11h12V9M5 16.500h7M7 13v3.500M11 13v3.500M13.500 1h3v5h-3zM15 6v10" />
          </svg>
          <VolumeX className="ml-[5px] size-[17px]" strokeWidth={1.600} />
          <div className="ml-[17px] flex flex-col items-end text-[12px] leading-4">
            <Fit w={29} ltr>01:18</Fit>
            <Fit w={62} ltr>04/03/2026</Fit>
          </div>
        </div>
      </div>
    </div>
  );
}

function Watermark() {
  return (
    <div className="pointer-events-none absolute top-[945px] left-[845px] w-[230px] text-[#c8c8c8] opacity-50">
      <Fit w={230} className="h-[73px] font-['DejaVu_Sans'] text-[76px] leading-[80px] font-bold">مستقل</Fit>
      <Fit w={230} ltr className="font-['Liberation_Sans'] text-[37px] leading-[40px] font-bold">mostaql.com</Fit>
    </div>
  );
}

export default function App() {
  return (
    <div className="relative flex h-[1080px] w-[1920px] flex-col overflow-hidden bg-[#d3e2fd] font-['Open_Sans','Noto_Sans','DejaVu_Sans_Condensed','DejaVu_Sans',sans-serif]">
      <TabStrip />
      <AddressBar />
      <Bookmarks />
      <div dir="rtl" className="flex min-h-0 flex-1 bg-[#f9fafb] font-['Roboto','DejaVu_Sans_Condensed','DejaVu_Sans',sans-serif]">
        <PageScrollbar />
        <Sidebar />
        <div className="flex w-[1734px] flex-col">
          <PageHeader />
          <main className="px-4 pt-[15px]">
            <TitleRow />
            <div className="mt-4 flex h-[528px] justify-between">
              <InfoCard />
              <StatCards />
            </div>
            <ProductsCard />
          </main>
          <div className="mt-auto h-[3px] border-t border-[#e5e7eb] bg-white" />
        </div>
      </div>
      <Taskbar />
      <Watermark />
    </div>
  );
}
